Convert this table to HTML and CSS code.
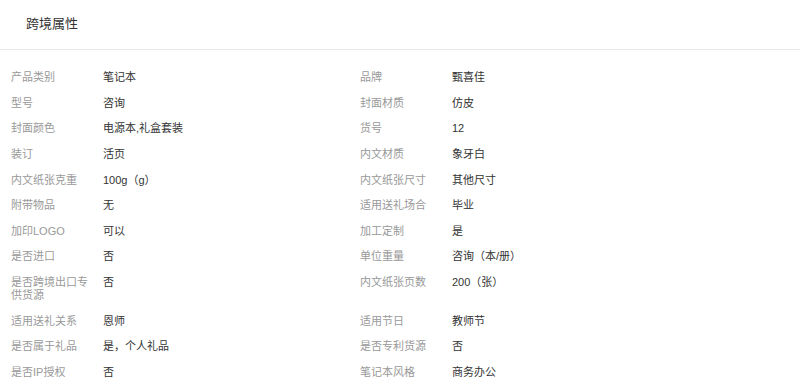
FILE: index.html
```html
<!DOCTYPE html>
<html lang="zh-CN">
<head>
<meta charset="utf-8">
<link rel="stylesheet" href="styles.css">
</head>
<body>
<div class="panel">
  <div class="header"><span class="title">跨境属性</span></div>
  <div class="attrs">
    <div class="item"><div class="label">产品类别</div><div class="value">笔记本</div></div>
    <div class="item"><div class="label">品牌</div><div class="value">甄喜佳</div></div>
    <div class="item"><div class="label">型号</div><div class="value">咨询</div></div>
    <div class="item"><div class="label">封面材质</div><div class="value">仿皮</div></div>
    <div class="item"><div class="label">封面颜色</div><div class="value">电源本,礼盒套装</div></div>
    <div class="item"><div class="label">货号</div><div class="value">12</div></div>
    <div class="item"><div class="label">装订</div><div class="value">活页</div></div>
    <div class="item"><div class="label">内文材质</div><div class="value">象牙白</div></div>
    <div class="item"><div class="label">内文纸张克重</div><div class="value">100g（g）</div></div>
    <div class="item"><div class="label">内文纸张尺寸</div><div class="value">其他尺寸</div></div>
    <div class="item"><div class="label">附带物品</div><div class="value">无</div></div>
    <div class="item"><div class="label">适用送礼场合</div><div class="value">毕业</div></div>
    <div class="item"><div class="label">加印LOGO</div><div class="value">可以</div></div>
    <div class="item"><div class="label">加工定制</div><div class="value">是</div></div>
    <div class="item"><div class="label">是否进口</div><div class="value">否</div></div>
    <div class="item"><div class="label">单位重量</div><div class="value">咨询（本/册）</div></div>
    <div class="item"><div class="label">是否跨境出口专供货源</div><div class="value">否</div></div>
    <div class="item"><div class="label">内文纸张页数</div><div class="value">200（张）</div></div>
    <div class="item"><div class="label">适用送礼关系</div><div class="value">恩师</div></div>
    <div class="item"><div class="label">适用节日</div><div class="value">教师节</div></div>
    <div class="item"><div class="label">是否属于礼品</div><div class="value">是，个人礼品</div></div>
    <div class="item"><div class="label">是否专利货源</div><div class="value">否</div></div>
    <div class="item"><div class="label">是否IP授权</div><div class="value">否</div></div>
    <div class="item"><div class="label">笔记本风格</div><div class="value">商务办公</div></div>
  </div>
</div>
</body>
</html>
```
FILE: styles.css
```css
* { box-sizing: border-box; }
html, body { margin: 0; padding: 0; background: #fff; }
body {
  font-family: "Liberation Sans", "Noto Sans CJK SC", sans-serif;
  color: #333;
  width: 800px;
  height: 392px;
  overflow: hidden;
}
.header {
  height: 50px;
  border-bottom: 1px solid #e8e8e8;
  padding: 14px 0 0 26px;
}
.title {
  font-size: 13px;
  line-height: 15px;
  color: #333;
}
.attrs {
  display: grid;
  grid-template-columns: 349px 349px;
  padding: 15px 0 0 11px;
}
.item {
  display: flex;
  padding: 6.3px 0;
  font-size: 11px;
  line-height: 13px;
}
.label {
  width: 80px;
  margin-right: 12px;
  color: #999;
  flex-shrink: 0;
}
.value {
  color: #333;
}
```
